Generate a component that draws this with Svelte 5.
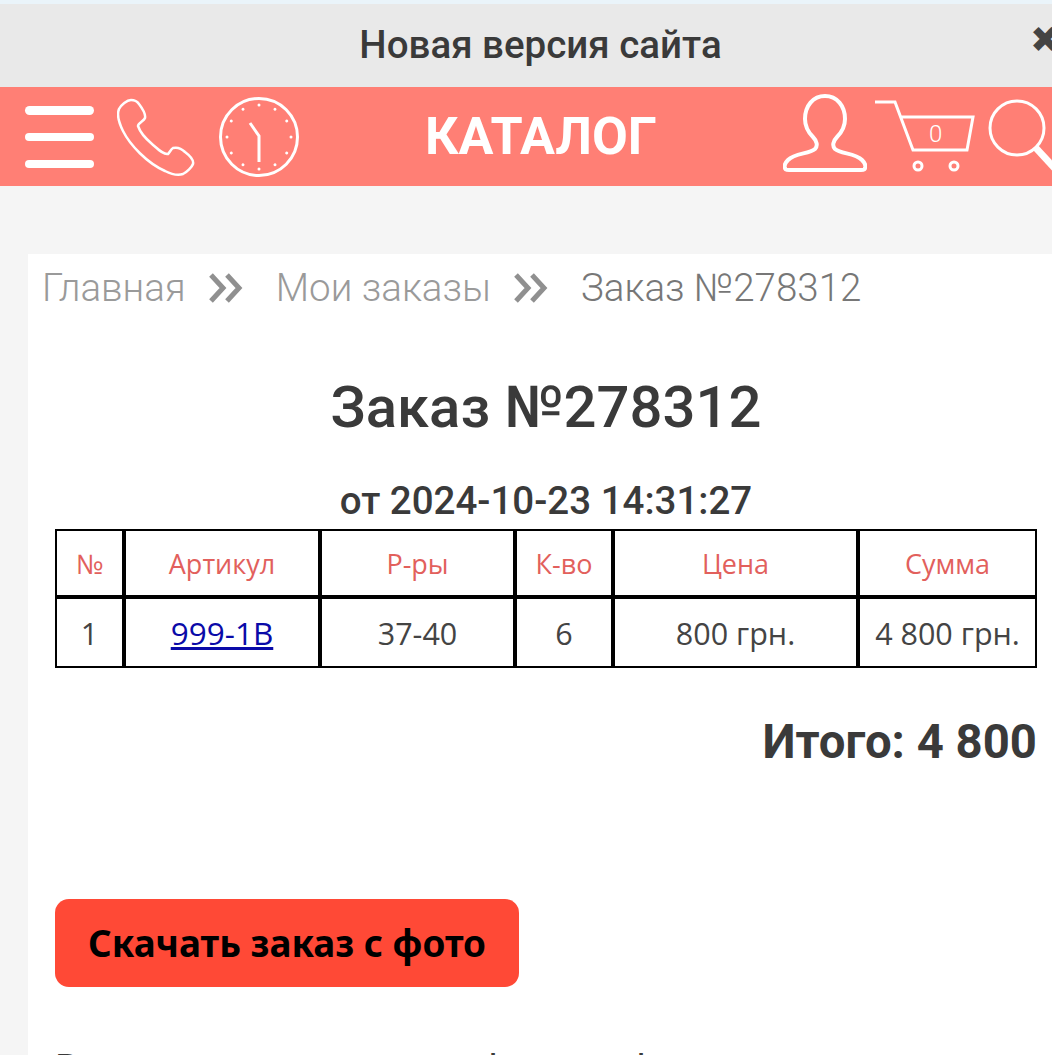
<script>
    const columns = ['№', 'Артикул', 'Р-ры', 'К-во', 'Цена', 'Сумма'];
    const widths = [69, 196, 195, 98, 245, 175];
    const row = { num: 1, sku: '999-1B', sizes: '37-40', qty: 6, price: '800 грн.', sum: '4 800 грн.' };
    const ticks = Array.from({ length: 12 }, (_, i) => i * 30);
</script>

{#snippet chevrons()}
    <svg class="sep" viewBox="0 0 36 30" width="36" height="30">
        <path d="M3 2 L15 15 L3 28 M19 2 L31 15 L19 28" />
    </svg>
{/snippet}

<div class="page">
    <div class="notice">
        <span class="notice-text">Новая версия сайта</span>
        <span class="close">✖</span>
    </div>

    <header class="topbar">
        <div class="left-icons">
            <div class="burger"><i></i><i></i><i></i></div>
            <svg class="phone" viewBox="0 0 78 78" width="78" height="78">
                <path d="M14 2 C10 2 4 7 2 11 C0 16 2 25 6 33 C13 47 30 65 48 73 C56 77 63 77 66 76 C70 74 75 69 76 66 C77 62 72 57 68 54 C64 50 60 49 56 50 C54 51 53 54 51 56 C47 57 42 52 35 46 C28 40 23 34 21 28 C21 25 27 23 28 20 C29 16 25 10 22 6 C20 3 17 2 14 2 Z" />
            </svg>
            <svg class="clock" viewBox="0 0 80 80" width="80" height="80">
                <circle cx="40" cy="40" r="38.5" />
                {#each ticks as angle}
                    <circle class="tick" cx="40" cy="8" r="1.5" transform="rotate({angle} 40 40)" />
                {/each}
                <path class="hands" d="M31 26 L40 39 L40 65" />
            </svg>
        </div>
        <div class="catalog">КАТАЛОГ</div>
        <div class="right-icons">
            <svg class="user" viewBox="0 0 84 78" width="84" height="78">
                <path d="M42 2 C30 2 22 12 22 25 C22 33 26 39 30 43 C34 47 35 52 32 55 C26 60 12 59 5 66 C2 69 1 72 2 74 C2 76 4 76 6 76 L78 76 C80 76 82 76 82 74 C83 72 82 69 79 66 C72 59 58 60 52 55 C49 52 50 47 54 43 C58 39 62 33 62 25 C62 12 54 2 42 2 Z" />
            </svg>
            <div class="cart">
                <svg viewBox="0 0 100 74" width="100" height="74">
                    <path d="M0 3 L20 3 L38 51 L92 51 L98 18 L26 18" />
                    <circle cx="43" cy="67" r="4" />
                    <circle cx="79" cy="67" r="4" />
                </svg>
                <span class="count">0</span>
            </div>
            <svg class="search" viewBox="0 0 64 70" width="64" height="70">
                <circle cx="34" cy="28" r="27" />
                <path class="handle" d="M52 47 L76 73" />
            </svg>
        </div>
    </header>

    <main class="card">
        <nav class="crumbs">
            <span>Главная</span>
            {@render chevrons()}
            <span>Мои заказы</span>
            {@render chevrons()}
            <span class="current">Заказ №278312</span>
        </nav>

        <h1>Заказ №278312</h1>
        <h2>от 2024-10-23 14:31:27</h2>

        <table>
            <colgroup>
                {#each widths as w}
                    <col style="width: {w}px" />
                {/each}
            </colgroup>
            <thead>
                <tr>
                    {#each columns as col}
                        <th>{col}</th>
                    {/each}
                </tr>
            </thead>
            <tbody>
                <tr>
                    <td>{row.num}</td>
                    <td><a href="#order">{row.sku}</a></td>
                    <td>{row.sizes}</td>
                    <td>{row.qty}</td>
                    <td>{row.price}</td>
                    <td>{row.sum}</td>
                </tr>
            </tbody>
        </table>

        <div class="total">Итого: 4 800</div>

        <button class="download">Скачать заказ с фото</button>

        <p class="note">Все вопросы по цене и фотографиям можно уточнить у менеджера</p>
    </main>
</div>

<style>
    :global(body) {
        margin: 0;
        background: #f5f5f5;
    }

    .page {
        width: 1052px;
        height: 1055px;
        overflow: hidden;
        font-family: Roboto, sans-serif;
        color: #3a3a3a;
    }

    .notice {
        position: relative;
        height: 83px;
        border-top: 4px solid #eaf4fa;
        background: #e9e9e9;
        display: flex;
        align-items: center;
        justify-content: center;
    }

    .notice-text {
        font-size: 38.5px;
        font-weight: 500;
        margin: -2px 0 0 29px;
    }

    .close {
        position: absolute;
        left: 1030px;
        top: 12px;
        font-family: "DejaVu Sans", sans-serif;
        font-size: 36px;
        line-height: 48px;
        color: #444;
    }

    .topbar {
        height: 99px;
        background: #ff7f75;
        display: flex;
        align-items: center;
        position: relative;
        overflow: hidden;
    }

    .left-icons {
        display: flex;
        align-items: center;
        padding-left: 25px;
    }

    .burger {
        width: 69px;
        height: 62px;
        margin-top: 1px;
        display: flex;
        flex-direction: column;
        justify-content: space-between;
        margin-right: 23px;
    }

    .burger i {
        display: block;
        height: 8.5px;
        border-radius: 5px;
        background: #fff;
    }

    .phone path, .user path {
        fill: none;
        stroke: #fff;
        stroke-width: 2.5;
    }

    .clock {
        margin-left: 24px;
        fill: none;
        stroke: #fff;
    }

    .clock > circle:first-child {
        stroke-width: 3;
    }

    .clock .tick {
        fill: #fff;
        stroke: none;
    }

    .clock .hands {
        stroke-width: 3;
    }

    .catalog {
        position: absolute;
        left: 425px;
        top: 18px;
        font-size: 52px;
        font-weight: 700;
        color: #fff;
        line-height: 64px;
    }

    .right-icons {
        margin-left: auto;
        align-self: stretch;
        display: flex;
        align-items: flex-start;
        gap: 8px;
        margin-right: 5px;
    }

    .user {
        margin-top: 7px;
    }

    .user path {
        stroke-width: 4;
    }

    .cart {
        position: relative;
        width: 100px;
        height: 74px;
        margin-top: 12px;
    }

    .cart svg {
        display: block;
        fill: none;
        stroke: #fff;
        stroke-width: 3;
    }

    .count {
        position: absolute;
        left: 54px;
        top: 21px;
        font-size: 24px;
        color: #fff;
        font-weight: 300;
    }

    .search {
        margin-top: 13px;
        fill: none;
        stroke: #fff;
        stroke-width: 3;
        overflow: visible;
    }

    .search .handle {
        stroke-width: 7;
    }

    .card {
        margin: 68px 0 0 28px;
        background: #fff;
        padding: 8px 15px 0 27px;
    }

    .crumbs {
        display: flex;
        align-items: center;
        margin-left: -13px;
        font-size: 38.5px;
        font-weight: 300;
        color: #9a9a9a;
        line-height: 52px;
    }

    .sep {
        margin: 0 32px 0 22px;
        fill: none;
        stroke: #909090;
        stroke-width: 5;
    }

    .crumbs .current {
        color: #777;
    }

    h1 {
        margin: 60px 0 0;
        text-align: center;
        font-size: 58px;
        font-weight: 500;
        line-height: 66px;
    }

    h2 {
        margin: 40px 0 0;
        text-align: center;
        font-size: 38.5px;
        font-weight: 500;
        line-height: 42px;
    }

    table {
        margin-top: 7px;
        width: 982px;
        table-layout: fixed;
        border-collapse: separate;
        border-spacing: 0;
        border: 2px solid #000;
        font-family: "Open Sans", sans-serif;
    }

    th, td {
        box-sizing: border-box;
        padding: 0;
        text-align: center;
        font-weight: 400;
        border-right: 4px solid #000;
    }

    th {
        height: 68px;
        font-size: 27px;
        color: #e2605c;
        border-bottom: 4px solid #000;
    }

    td {
        height: 67px;
        font-size: 30.5px;
        color: #444;
    }

    th:last-child, td:last-child {
        border-right: 0;
    }

    a {
        color: #0a0aa8;
        font-size: 31.5px;
    }

    .total {
        margin-top: 43px;
        text-align: right;
        font-size: 47.3px;
        font-weight: 700;
        line-height: 62px;
    }

    .download {
        display: block;
        margin-top: 126px;
        width: 464px;
        height: 88px;
        border: 0;
        border-radius: 14px;
        background: #ff4936;
        color: #000;
        font-family: "Noto Sans", sans-serif;
        font-size: 36.8px;
        font-weight: 700;
    }

    .note {
        margin: 59px 0 0;
        font-size: 38.5px;
        white-space: nowrap;
    }
</style>
